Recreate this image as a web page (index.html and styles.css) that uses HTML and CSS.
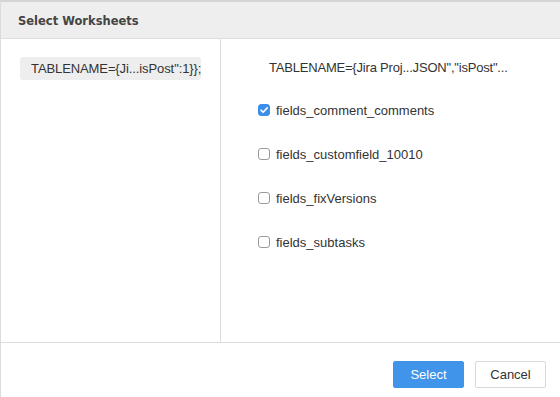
FILE: index.html
```html
<!DOCTYPE html>
<html>
<head>
<meta charset="utf-8">
<link rel="stylesheet" href="styles.css">
</head>
<body>
<div class="dialog">
  <div class="header">Select Worksheets</div>
  <div class="content">
    <div class="left">
      <div class="tag">TABLENAME={Ji...isPost":1}};</div>
    </div>
    <div class="right">
      <div class="source">TABLENAME={Jira Proj...JSON","isPost"...</div>
      <label class="row"><span class="cb checked"><svg viewBox="0 0 12 12" width="12" height="12"><path d="M3 6.2 L5.1 8.3 L9.2 3.9" fill="none" stroke="#fff" stroke-width="1.6" stroke-linecap="round" stroke-linejoin="round"/></svg></span>fields_comment_comments</label>
      <label class="row"><span class="cb"></span>fields_customfield_10010</label>
      <label class="row"><span class="cb"></span>fields_fixVersions</label>
      <label class="row"><span class="cb"></span>fields_subtasks</label>
    </div>
  </div>
  <div class="footer">
    <button class="btn primary">Select</button>
    <button class="btn">Cancel</button>
  </div>
</div>
</body>
</html>
```

FILE: styles.css
```css
html, body {
  margin: 0;
  padding: 0;
  background: #fff;
}
body {
  font-family: "Liberation Sans", Arial, sans-serif;
  color: #333;
  font-size: 13px;
}
.dialog {
  width: 560px;
  height: 397px;
  box-sizing: border-box;
  border-top: 2px solid #d4d4d4;
  border-left: 1px solid #dcdcdc;
  display: flex;
  flex-direction: column;
  overflow: hidden;
}
.header {
  height: 37px;
  box-sizing: border-box;
  background: #eeeeee;
  border-bottom: 1px solid #dddddd;
  font-family: "DejaVu Sans", Verdana, sans-serif;
  font-weight: bold;
  font-size: 11.5px;
  color: #444;
  padding: 0 0 0 17px;
  line-height: 39px;
}
.content {
  display: flex;
  height: 303px;
  border-bottom: 1px solid #dddddd;
  flex: none;
}
.left {
  width: 220px;
  border-right: 1px solid #dddddd;
  padding: 18px 0 0 19px;
  box-sizing: border-box;
  flex: none;
}
.tag {
  display: inline-block;
  background: #eeeeee;
  border-radius: 3px;
  height: 23px;
  line-height: 23px;
  padding: 0 0 0 11px;
  width: 181px;
  box-sizing: border-box;
  white-space: nowrap;
  font-size: 13px;
  letter-spacing: -0.1px;
  color: #333;
}
.right {
  flex: 1;
  padding: 21px 0 0 37px;
}
.source {
  height: 16px;
  line-height: 16px;
  padding-left: 11px;
  margin-bottom: 26px;
  white-space: nowrap;
  letter-spacing: -0.2px;
}
.row {
  display: flex;
  align-items: center;
  height: 16px;
  margin-bottom: 28px;
  color: #333;
}
.cb {
  width: 12px;
  height: 12px;
  box-sizing: border-box;
  border: 1px solid #9a9a9a;
  border-radius: 3px;
  background: #fff;
  margin-right: 6px;
  display: flex;
  align-items: center;
  justify-content: center;
  flex: none;
}
.cb.checked {
  background: #3c8fe8;
  border-color: #3c8fe8;
}
.cb.checked svg {
  display: block;
  margin: -1px;
}
.footer {
  display: flex;
  justify-content: flex-end;
  gap: 11px;
  padding: 18px 14px 0 0;
}
.btn {
  width: 71px;
  height: 27px;
  border: 1px solid #d9d9d9;
  background: #fff;
  border-radius: 2px;
  font-family: "Liberation Sans", Arial, sans-serif;
  font-size: 13px;
  color: #333;
  padding: 0;
}
.btn.primary {
  background: #4094ea;
  border-color: #4094ea;
  color: #fff;
}
```
